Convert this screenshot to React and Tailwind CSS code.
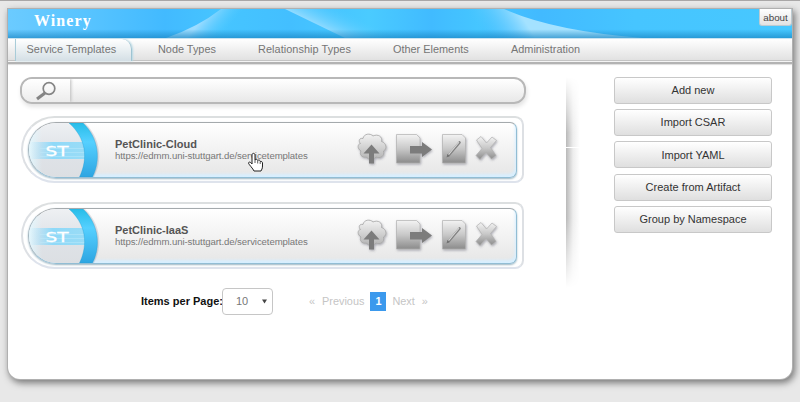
import React from "react";

function HeaderArt() {
  return (
    <svg className="absolute inset-0" width="784" height="29" viewBox="0 0 784 29">
      <defs>
        <linearGradient id="base" x1="0" x2="1" y1="0" y2="0">
          <stop offset="0" stopColor="#6bcbff" />
          <stop offset=".1" stopColor="#58c4ff" />
          <stop offset=".2" stopColor="#42baff" />
          <stop offset=".27" stopColor="#46c5ff" />
          <stop offset=".36" stopColor="#43bfff" />
          <stop offset=".46" stopColor="#4acbff" />
          <stop offset=".54" stopColor="#41bbff" />
          <stop offset=".6" stopColor="#45c6ff" />
          <stop offset=".68" stopColor="#42baff" />
          <stop offset=".8" stopColor="#46c5ff" />
          <stop offset="1" stopColor="#47c8ff" />
        </linearGradient>
        <linearGradient id="beam" gradientUnits="userSpaceOnUse" x1="192" y1="13" x2="212" y2="29">
          <stop offset="0" stopColor="#9cdcff" />
          <stop offset="1" stopColor="#5accff" stopOpacity="0" />
        </linearGradient>
        <linearGradient id="ray" gradientUnits="userSpaceOnUse" x1="307" y1="14.500" x2="319" y2="-9">
          <stop offset="0" stopColor="#8edaff" />
          <stop offset="1" stopColor="#49c9ff" stopOpacity="0" />
        </linearGradient>
        <linearGradient id="wave" gradientUnits="userSpaceOnUse" x1="470" y1="22" x2="508" y2="-2">
          <stop offset="0" stopColor="#47c0ff" stopOpacity="0" />
          <stop offset="1" stopColor="#a4e2ff" />
        </linearGradient>
        <linearGradient id="low" x1="0" x2="0" y1="0" y2="1">
          <stop offset=".7" stopColor="#1682c0" stopOpacity="0" />
          <stop offset="1" stopColor="#1682c0" stopOpacity=".65" />
        </linearGradient>
      </defs>
      <rect width="784" height="29" fill="url(#base)" />
      <path d="M158 29Q190 18 213 0H270L270 29Z" fill="url(#beam)" />
      <path d="M277 0L337 29H400V0Z" fill="url(#ray)" />
      <path d="M440 0H496Q545 22 635 29H460Z" fill="url(#wave)" />
      <rect width="784" height="29" fill="url(#low)" />
    </svg>
  );
}

function Badge({ id }) {
  return (
    <svg className="shrink-0" width="72" height="54" viewBox="1 0 72 54">
      <defs>
        <linearGradient id={id + "r"} x1="0" x2="0" y1="0" y2="1">
          <stop offset="0" stopColor="#27bde8" />
          <stop offset=".35" stopColor="#55d0ff" />
          <stop offset="1" stopColor="#2da5e2" />
        </linearGradient>
        <linearGradient id={id + "b"} x1="0" x2="1" y1="0" y2="0">
          <stop offset="0" stopColor="#8edcff" stopOpacity="0" />
          <stop offset=".4" stopColor="#8fd9f8" />
          <stop offset="1" stopColor="#9adcf6" />
        </linearGradient>
        <linearGradient id={id + "g"} x1="0" x2="0" y1="0" y2="1">
          <stop offset="0" stopColor="#eef0f3" />
          <stop offset=".5" stopColor="#dfe3e8" />
          <stop offset="1" stopColor="#dcdfe3" />
        </linearGradient>
        <linearGradient id={id + "l"} x1="0" x2="1" y1="0" y2="0">
          <stop offset="0" stopColor="#e2f8ff" />
          <stop offset=".25" stopColor="#e2f8ff" stopOpacity="0" />
        </linearGradient>
      </defs>
      <path d="M27 0H56C71 15 74 36 64 54H27A27 27 0 0 1 27 0Z" fill={"url(#" + id + "g)"} />
      <path d="M27 0H56V54H27A27 27 0 0 1 27 0Z" fill={"url(#" + id + "l)"} />
      <rect x="2" y="19" width="57" height="17" fill={"url(#" + id + "b)"} />
      <path d="M12 25.500H59M12 29.500H59M12 33.500H59" stroke="#c2ebfa" strokeOpacity=".45" />
      <path d="M42 0H56C72 15 74 38 65 54H52C62 35 59 15 42 0Z" fill="#778" fillOpacity=".2" transform="translate(1 0)" />
      <path d="M41 0H55C71 15 73 38 64.500 54H51.500C60.500 35 58 15 41 0Z" fill={"url(#" + id + "r)"} stroke="#249ed2" strokeOpacity=".5" strokeWidth=".7" />
      <text x="17.500" y="32.500" fontSize="14" textLength="23" lengthAdjust="spacingAndGlyphs" fill="#fff" stroke="#fff" strokeWidth=".3" className="font-['DejaVu_Sans',sans-serif]">ST</text>
    </svg>
  );
}

function Actions({ id }) {
  const g = "url(#" + id + "i)";
  return (
    <svg className="ml-auto mr-[14px] mt-[9px] shrink-0" width="146" height="36" viewBox="356 132 146 36">
      <defs>
        <linearGradient id={id + "i"} x1="0" x2="0" y1="0" y2="1">
          <stop offset="0" stopColor="#f3f3f3" />
          <stop offset=".5" stopColor="#c8c8c8" />
          <stop offset="1" stopColor="#8b8b8b" />
        </linearGradient>
        <linearGradient id={id + "c"} x1="0" x2="0" y1="0" y2="1">
          <stop offset="0" stopColor="#f3f3f3" />
          <stop offset="1" stopColor="#b4b4b4" />
        </linearGradient>
        <filter id={id + "s"} x="-20%" y="-20%" width="150%" height="150%">
          <feDropShadow dx=".8" dy="1.200" stdDeviation=".8" floodColor="#555566" floodOpacity=".45" />
        </filter>
      </defs>
      <g filter={"url(#" + id + "s)"}>
        <path d="M363 138.500C364 133.500 370 133 373 136C378 133.500 383 137 381.500 141.500C386.500 143 387.500 149 383.500 151C385 156 380 159 376 157C373 160.500 368 160 366.500 157C361.500 158 359 154 361 151C357 148.500 357.500 144 360.500 143.500C358 141 359.500 137.500 363 138.500Z" fill={"url(#" + id + "c)"} stroke="#a6a6a6" strokeWidth=".8" />
        <path d="M371.500 144.500L379.500 153.500H374V163.500H369V153.500H363.500Z" fill="#7c7c7c" />
      </g>
      <g filter={"url(#" + id + "s)"}>
        <path d="M396.500 134.500H416.500L420 138V163H396.500Z" fill={g} stroke="#b2b2b2" strokeWidth=".7" />
        <path d="M410 146H422V142L432 149.500L422 157V153.500H410Z" fill="#7b7b7b" />
      </g>
      <g filter={"url(#" + id + "s)"}>
        <path d="M442.500 134.500H462L465.500 138V163H442.500Z" fill={g} stroke="#b2b2b2" strokeWidth=".7" />
        <path d="M448.500 155.500L459.500 142.500" stroke="#808080" strokeWidth="2.600" strokeLinecap="round" />
        <path d="M448.500 154.700L459 142.200" stroke="#d4d4d4" strokeWidth="1.100" />
        <path d="M446.500 157.500L447.500 154L449.500 156Z" fill="#707070" />
      </g>
      <path filter={"url(#" + id + "s)"} d="M476.500 140L481 136.500L486.500 143L492 137L496.500 140.500L490.500 147.500L496 155.500L491.500 159L486 152.500L480 159.500L476 155.500L482 148.500Z" fill={g} stroke="#b0b0b0" strokeWidth=".7" />
    </svg>
  );
}

function TemplateCard({ id, name }) {
  return (
    <div className="h-[67px] w-[503px] rounded-l-[34px] rounded-r-[9px] border-2 border-t-[#dcdfe0] border-x-[#dde0e4] border-b-[#dee3ec] bg-white pl-[5px] pt-[4px]">
      <div className="flex h-[56px] w-[489px] overflow-hidden rounded-l-[28px] rounded-r-[7px] border border-t-[#a5aaad] border-l-[#a3b6c0] border-r-[#91bdd4] border-b-[#91bdd4] bg-linear-to-b from-white to-[#e6e6e6] shadow-[0_1px_2px_#9bb5c2,inset_-1px_-3px_3px_#d7efff]">
        <Badge id={id} />
        <div className="ml-[14px] pt-[13.500px]">
          <div className="whitespace-nowrap text-[11px] font-bold leading-[14px] text-[#555]">{name}</div>
          <div className="whitespace-nowrap text-[9.600px] leading-[10px] tracking-[-0.090px] text-[#777]">https://edmm.uni-stuttgart.de/servicetemplates</div>
        </div>
        <Actions id={id} />
      </div>
    </div>
  );
}

const buttons = ["Add new", "Import CSAR", "Import YAML", "Create from Artifact", "Group by Namespace"];

export default function App() {
  return (
    <div className="relative h-[402px] w-[800px] overflow-hidden border-t border-[#a9a7a7] bg-[#e8e8e8] pl-[8px] pt-[8px] font-['Liberation_Sans',Arial,sans-serif] text-[10.900px]">
      <div className="h-[370px] w-[784px] overflow-hidden rounded-b-[12px] bg-white shadow-[0_0_0_1px_#b0b0b0,2px_3px_7px_1px_#777]">
        <header className="relative flex h-[29px] justify-between">
          <HeaderArt />
          <h1 className="relative pl-[26px] pt-[2px] font-['Liberation_Serif',serif] text-[16px] font-bold leading-[20px] tracking-[1.100px] text-white">Winery</h1>
          <button className="relative h-[17px] w-[33px] rounded-b-[3px] border border-t-0 border-[#bccbd2] bg-linear-to-b from-white to-[#e2e2e2] text-[9.800px] leading-[15px] text-[#444]">about</button>
        </header>
        <nav className="flex h-[23px] border-t border-[#c9e4f2] bg-linear-to-b from-white to-[#e0e0e0] pl-[7px] leading-[21px] text-[#757575]">
          <div className="w-[117px] rounded-tr-[10px] border-x border-l-[#a9ccd8] border-r-[#9fc4d2] bg-linear-to-b from-white via-[#e9eff2] to-[#d4dfe5] pl-[10.500px] tracking-[0.060px] shadow-[1px_0_2px_#b8d9e5]">Service Templates</div>
          <div className="w-[100px] pl-[26px]">Node Types</div>
          <div className="w-[135px] pl-[26px] tracking-[0.060px]">Relationship Types</div>
          <div className="w-[118px] pl-[26px]">Other Elements</div>
          <div className="pl-[26px]">Administration</div>
        </nav>
        <div className="h-[3px] border-b-2 border-t border-b-[#b3b3b3] border-t-[#f4f4f4] bg-white shadow-[0_-1px_0_#c4c4c4,0_1px_1px_#ddd]" />

        <main className="flex pt-[13px]">
          <section className="w-[558px] pl-[12px]">
            <div className="flex h-[27px] w-[506px] overflow-hidden rounded-[12px] border-2 border-[#b8b8b8] bg-linear-to-b from-white to-[#e8e8e8] shadow-[1px_3px_4px_#e4e4e4]">
              <div className="flex w-[48px] items-center justify-center bg-linear-to-b from-white to-[#ececec] shadow-[1px_0_3px_#bbb]">
                <svg width="22" height="20" viewBox="0 0 22 20" fill="none" stroke="#858585">
                  <circle cx="14" cy="7.500" r="5.800" strokeWidth="1.700" />
                  <path d="M10 12L2 18" strokeWidth="3.200" />
                </svg>
              </div>
            </div>
            <div className="flex flex-col gap-[19px] pl-px pt-[12px]">
              <TemplateCard id="cloud" name="PetClinic-Cloud" />
              <TemplateCard id="iaas" name="PetClinic-IaaS" />
            </div>
            <div className="flex items-center pl-[121px] pt-[19px]">
              <label className="w-[81px] whitespace-nowrap text-[11px] font-bold text-[#111]">Items per Page:</label>
              <div className="flex h-[27px] w-[51px] items-center justify-between rounded-[4px] border border-[#c6c6c6] pl-[13px] pr-[5px] text-[11px] text-[#777]">
                <span>10</span>
                <svg width="5" height="5" viewBox="0 0 6 5"><path d="M0 0H6L3 5Z" fill="#444" /></svg>
              </div>
              <div className="flex items-center whitespace-nowrap pl-[36px] text-[#c5c5c5]">
                <span>«</span>
                <span className="ml-[7px]">Previous</span>
                <span className="ml-[6px] h-[19px] w-[16px] bg-[#3b99ed] text-center font-bold leading-[19px] text-white">1</span>
                <span className="ml-[6px]">Next</span>
                <span className="ml-[7px]">»</span>
              </div>
            </div>
          </section>
          <div className="flex h-[211px] w-[14px] flex-col gap-px">
            <div className="h-[70px] bg-linear-to-r from-[#b9b9b9] via-[#ededed] to-white mask-t-from-20%" />
            <div className="h-[140px] bg-linear-to-r from-[#b9b9b9] via-[#ededed] to-white mask-b-from-50%" />
          </div>
          <aside className="ml-[34px] flex w-[158px] flex-col gap-[5.200px]">
            {buttons.map((b) => (
              <button key={b} className="h-[27px] rounded-[3px] border border-[#c8c8c8] bg-linear-to-b from-white to-[#dfdfdf] text-[11px] text-[#333]">{b}</button>
            ))}
          </aside>
        </main>
      </div>
      <svg className="absolute left-[247px] top-[151px]" width="17" height="21" viewBox="0 0 17 21">
        <path d="M5 12V3C5 .8 8 .8 8 3V8C9 6.800 10.500 7.300 10.700 8.500C12 7.500 13.200 8.300 13.200 9.500C14.500 9 15.500 10 15.500 11V14C15.500 17 14.500 17.500 14 19H7C6 16.500 2 12.800 1.500 11.200C1.500 9.500 3.500 9.700 5 12Z" fill="#fff" stroke="#222" strokeWidth="1" />
        <path d="M8 8V11M10.700 9V11.500M13.200 10V12" stroke="#333" strokeWidth=".8" />
      </svg>
    </div>
  );
}
